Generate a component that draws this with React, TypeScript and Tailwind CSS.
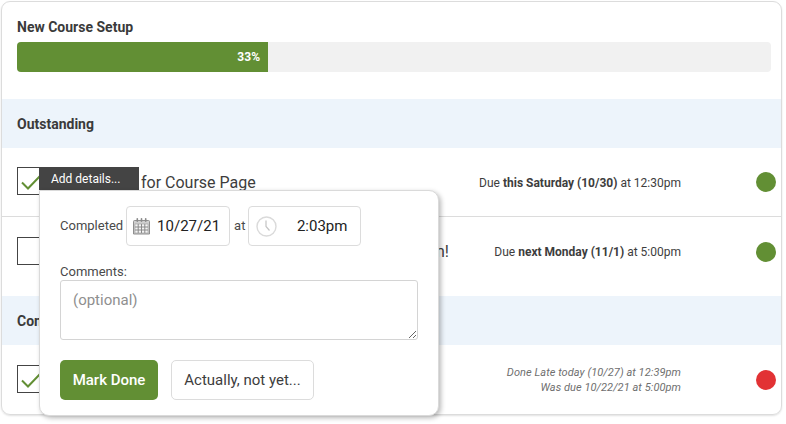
export default function App() {
  const font = { fontFamily: 'Roboto, "Liberation Sans", sans-serif' };
  return (
    <div style={font} className="relative h-[424px] w-[786px] overflow-hidden bg-white text-[#3d3d3d]">
      <div className="ml-px mt-px flex h-[414px] w-[781px] flex-col overflow-hidden rounded-[9px] border border-[#dcdcdc] shadow-[0_1px_2px_rgba(0,0,0,0.12)]">
        <div className="flex h-[97px] shrink-0 flex-col px-[15px] pt-[15px]">
          <div className="text-[14px] font-bold leading-[20px] text-[#3a3a3a]">New Course Setup</div>
          <div className="mt-[5px] h-[30px] w-[754px] overflow-hidden rounded-[4px] bg-[#f1f1f1]">
            <div className="flex h-full w-[251px] items-center justify-end bg-[#628f34] pr-[8px] text-[12px] font-bold text-white">33%</div>
          </div>
        </div>

        <div className="flex h-[49px] shrink-0 items-center bg-[#edf4fb] px-[15px] pt-[2px] text-[14px] font-bold text-[#3a3a3a]">Outstanding</div>

        <Row
          height="h-[69px]"
          checked
          title="for Course Page"
          titleClass="ml-[96px] pt-[2px]"
          dueClass="pt-[2px]"
          status="bg-[#628f34]"
          due={<>Due <b>this Saturday (10/30)</b> at 12:30pm</>}
          border
        />
        <Row
          height="h-[79px] pb-[10px]"
          title="n!"
          titleClass="ml-[391px]"
          status="bg-[#628f34]"
          due={<>Due <b>next Monday (11/1)</b> at 5:00pm</>}
        />

        <div className="flex h-[49px] shrink-0 items-center bg-[#edf4fb] px-[15px] pt-[2px] text-[14px] font-bold text-[#3a3a3a]">Completed</div>

        <div className="flex min-h-0 flex-1 items-center pl-[15px] pr-[5px]">
          <Check checked />
          <div className="flex-1" />
          <div className="text-right text-[11px] italic leading-[15px] tracking-[0.06px] text-[#6f6f6f]">
            <div>Done Late today (10/27) at 12:39pm</div>
            <div>Was due 10/22/21 at 5:00pm</div>
          </div>
          <div className="ml-[75px] h-[20px] w-[20px] rounded-full bg-[#e23234]" />
        </div>
      </div>

      {/* Tooltip over the first row */}
      <div className="absolute left-[39px] top-[167px] flex h-[23px] w-[100px] items-center bg-[#444444] pl-[12px] text-[12px] text-white">Add details...</div>

      {/* Popover */}
      <div className="absolute left-[39px] top-[190px] flex h-[226px] w-[400px] flex-col rounded-br-[10px] rounded-bl-[10px] rounded-tr-[10px] border border-[#dadada] bg-white px-[20px] pt-[15px] shadow-[2px_2px_5px_rgba(0,0,0,0.28)]">
        <div className="flex items-center text-[13px] text-[#4a4a4a]">
          <span>Completed</span>
          <div className="ml-[3px] flex h-[40px] w-[104px] items-center rounded-[4px] border border-[#dcdcdc] pl-[6px] text-[15px] text-[#222]">
            <svg width="17" height="18" viewBox="0 0 17 18" className="shrink-0">
              <path d="M1.5 3.5h14a1 1 0 0 1 1 1V17H.5V4.5a1 1 0 0 1 1-1z" fill="#cfcfcf" stroke="#8f8f8f" />
              <rect x="2" y="7" width="13" height="9" fill="#f4f4f4" stroke="#9a9a9a" strokeWidth="0.6" />
              <path d="M2 10h13M2 13h13M5.2 7v9M8.5 7v9M11.8 7v9" stroke="#8a8a8a" strokeWidth="1" />
              <rect x="3.5" y="1" width="1.6" height="4" rx="0.8" fill="#8a8a8a" />
              <rect x="7.7" y="1" width="1.6" height="4" rx="0.8" fill="#8a8a8a" />
              <rect x="11.9" y="1" width="1.6" height="4" rx="0.8" fill="#8a8a8a" />
            </svg>
            <span className="ml-[7px]">10/27/21</span>
          </div>
          <span className="ml-[4px]">at</span>
          <div className="ml-[3px] flex h-[40px] w-[113px] items-center justify-between rounded-[4px] border border-[#dcdcdc] pl-[7px] pr-[13px] text-[15px] text-[#222]">
            <svg width="21" height="21" viewBox="0 0 21 21" className="shrink-0">
              <circle cx="10.5" cy="10.5" r="9.5" fill="none" stroke="#dadada" strokeWidth="1.4" />
              <path d="M10 4.5v6l3.5 4" fill="none" stroke="#c4c4c4" strokeWidth="1.2" />
            </svg>
            <span>2:03pm</span>
          </div>
        </div>

        <label className="mt-[18px] text-[13px] leading-[16px] text-[#4a4a4a]">Comments:</label>
        <textarea
          placeholder="(optional)"
          className="mt-0 h-[60px] w-[358px] rounded-[3px] border border-[#d4d4d4] px-[12px] py-[9px] text-[15px] leading-[20px] text-[#222] outline-none placeholder:text-[#8f8f8f]"
        />

        <div className="mt-[20px] flex gap-[13px]">
          <button className="h-[40px] w-[98px] rounded-[5px] bg-[#628f34] text-[15px] font-medium text-white">Mark Done</button>
          <button className="h-[40px] w-[143px] rounded-[5px] border border-[#dcdcdc] bg-white text-[15px] text-[#3d3d3d]">Actually, not yet...</button>
        </div>
      </div>
    </div>
  );
}

function Check({ checked }: { checked?: boolean }) {
  return (
    <div className="mb-[2px] h-[28px] w-[28px] shrink-0 border border-[#444] bg-white">
      {checked && (
        <svg width="26" height="26" viewBox="0 0 26 26">
          <path d="M4 14.5l6 6L23 7" fill="none" stroke="#628f34" strokeWidth="2" />
        </svg>
      )}
    </div>
  );
}

function Row({
  height,
  checked,
  title,
  titleClass,
  dueClass = "",
  due,
  status,
  border,
}: {
  height: string;
  checked?: boolean;
  title: string;
  titleClass: string;
  dueClass?: string;
  due: React.ReactNode;
  status: string;
  border?: boolean;
}) {
  return (
    <div className={`flex ${height} shrink-0 items-center pl-[15px] pr-[5px] ${border ? "border-b border-[#dcdcdc]" : ""}`}>
      <Check checked={checked} />
      <div className={`${titleClass} flex-1 text-[16px] text-[#3d3d3d]`}>{title}</div>
      <div className={`${dueClass} text-right text-[12px] text-[#3d3d3d] [&_b]:font-bold`}>{due}</div>
      <div className={`ml-[75px] h-[20px] w-[20px] rounded-full ${status}`} />
    </div>
  );
}
